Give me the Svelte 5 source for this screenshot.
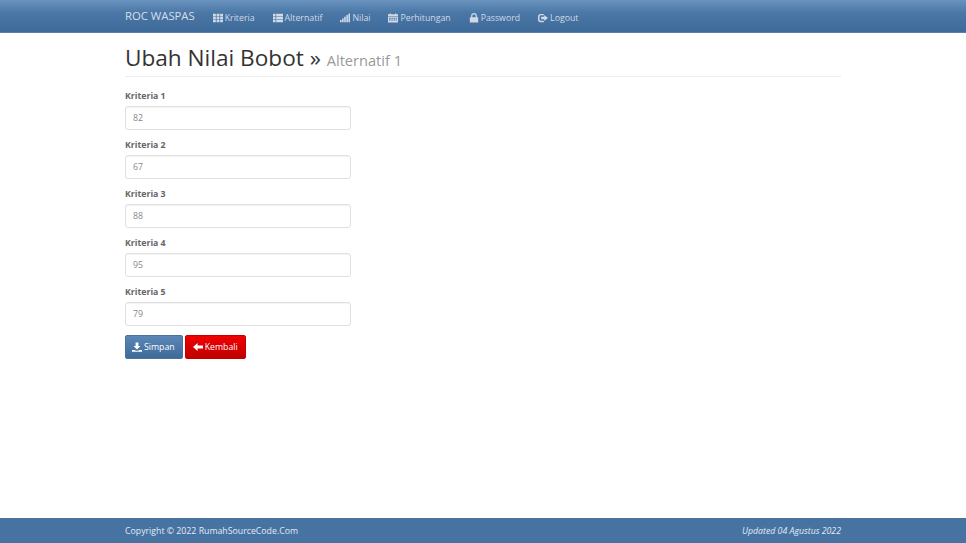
<script>
	const menu = [
		{ label: 'Kriteria', icon: 'th' },
		{ label: 'Alternatif', icon: 'list' },
		{ label: 'Nilai', icon: 'signal' },
		{ label: 'Perhitungan', icon: 'calendar' },
		{ label: 'Password', icon: 'lock' },
		{ label: 'Logout', icon: 'logout' }
	];

	const fields = [
		{ name: 'Kriteria 1', value: '82' },
		{ name: 'Kriteria 2', value: '67' },
		{ name: 'Kriteria 3', value: '88' },
		{ name: 'Kriteria 4', value: '95' },
		{ name: 'Kriteria 5', value: '79' }
	];
</script>

{#snippet icon(name)}
	<svg class="icon" viewBox="0 0 12 12" aria-hidden="true">
		{#if name === 'th'}
			<path d="M0 1h3.400v2.900H0zM4.300 1h3.400v2.900H4.300zM8.600 1H12v2.900H8.600zM0 4.600h3.400v2.900H0zM4.300 4.600h3.400v2.900H4.300zM8.600 4.600H12v2.900H8.600zM0 8.200h3.400v2.900H0zM4.300 8.200h3.400v2.900H4.300zM8.600 8.200H12v2.900H8.600z" />
		{:else if name === 'list'}
			<path d="M0 1h3v2.900H0zM3.800 1H12v2.900H3.800zM0 4.600h3v2.900H0zM3.800 4.600H12v2.900H3.800zM0 8.200h3v2.900H0zM3.800 8.200H12v2.900H3.800z" />
		{:else if name === 'signal'}
			<path d="M0 8.500h1.900V11H0zM2.500 6.500h1.900V11H2.500zM5 4.500h1.900V11H5zM7.600 2.500h1.900V11H7.600zM10.100 .5H12V11h-1.900z" />
		{:else if name === 'calendar'}
			<path d="M0 1.500h2V.500h1.500v1h5v-1H10v1h2v2.600H0zM0 4.800h12V11.500H0zM1.200 5.800V7h2V5.800zM4 5.800V7h1.800V5.800zM6.600 5.800V7h1.800V5.800zM9.200 5.800V7h1.600V5.800zM1.200 7.800V9h2V7.800zM4 7.800V9h1.800V7.800zM6.600 7.800V9h1.800V7.800zM9.200 7.800V9h1.600V7.800z" fill-rule="evenodd" />
		{:else if name === 'lock'}
			<path d="M1 5.200h1.500V3.500a3.500 3.500 0 0 1 7 0v1.700H11v6.300H1zM4 5.200h4V3.500a2 2 0 0 0-4 0z" fill-rule="evenodd" />
		{:else if name === 'logout'}
			<path d="M7 1.200v1.600H3.500A1.700 1.700 0 0 0 1.800 4.500v3.200a1.700 1.700 0 0 0 1.700 1.700H7V11H3.200A3.200 3.200 0 0 1 0 7.800V4.400A3.200 3.200 0 0 1 3.200 1.200zM7.500 2.500 12 6 7.500 9.500v-2H3.800v-3h3.700z" />
		{:else if name === 'save'}
			<path d="M4.300 .5h3.400v4.300h2.500L6 9 1.800 4.800h2.500zM0 9.500h3.200l1.300 1h3l1.300-1H12v2.300H0z" />
		{:else if name === 'back'}
			<path d="M5.500 1.300v3H12v3.400H5.500v3L0 6z" />
		{/if}
	</svg>
{/snippet}

<div class="page">
	<nav class="navbar">
		<div class="container nav-row">
			<span class="brand">ROC WASPAS</span>
			<ul>
				{#each menu as item}
					<li>{@render icon(item.icon)} {item.label}</li>
				{/each}
			</ul>
		</div>
	</nav>

	<main class="container content">
		<h1>Ubah Nilai Bobot &raquo; <small>Alternatif 1</small></h1>

		<form>
			{#each fields as field}
				<div class="form-group">
					<label for={field.name}>{field.name}</label>
					<input id={field.name} type="text" value={field.value} />
				</div>
			{/each}
			<div class="actions">
				<button type="button" class="btn btn-primary">{@render icon('save')} Simpan</button>
				<button type="button" class="btn btn-danger">{@render icon('back')} Kembali</button>
			</div>
		</form>
	</main>

	<footer>
		<div class="container footer-row">
			<span>Copyright &copy; 2022 RumahSourceCode.Com</span>
			<em>Updated 04 Agustus 2022</em>
		</div>
	</footer>
</div>

<style>
	:global(body) {
		margin: 0;
		background: #fff;
		font-family: 'Open Sans', 'Noto Sans', sans-serif;
		font-size: 10px;
		color: #555;
	}
	.page {
		display: flex;
		flex-direction: column;
		min-height: 543px;
	}
	.container {
		width: 716px;
		margin: 0 auto;
	}
	.navbar {
		height: 33px;
		box-sizing: border-box;
		background: linear-gradient(to bottom, #6a93be 0%, #4a77a6 40%, #3e6a99 100%);
		border-bottom: 1px solid #5a7ea6;
	}
	.nav-row {
		display: flex;
		align-items: center;
		height: 32px;
	}
	.brand {
		margin: 0 18px 2px 0;
		font-size: 11.300px;
		color: #d6dfe9;
	}
	ul {
		display: flex;
		gap: 18px;
		margin: 0;
		padding: 3px 0 0;
		list-style: none;
	}
	li {
		display: flex;
		align-items: center;
		gap: 2px;
		font-size: 8.750px;
		color: #cfdae6;
	}
	.icon {
		width: 10px;
		height: 10px;
		fill: currentColor;
		flex: none;
	}
	.content {
		flex: 1;
	}
	h1 {
		margin: 10px 0 12px;
		padding-bottom: 4px;
		border-bottom: 1px solid #eee;
		font-size: 22.600px;
		font-weight: 400;
		line-height: 29px;
		color: #333;
	}
	h1 small {
		font-size: 14.600px;
		line-height: 1;
		color: #999;
	}
	.form-group {
		margin-bottom: 8px;
	}
	label {
		display: block;
		margin-bottom: 3px;
		font-size: 8.750px;
		font-weight: 700;
		line-height: 14px;
		color: #666;
	}
	input {
		display: block;
		width: 226px;
		height: 24px;
		box-sizing: border-box;
		padding: 0 7px;
		border: 1px solid #e0e0e0;
		border-radius: 3px;
		box-shadow: inset 0 1px 1px rgba(0, 0, 0, 0.05);
		font: inherit;
		font-size: 8.750px;
		color: #888;
		background: #fff;
	}
	.actions {
		display: flex;
		gap: 2px;
		margin-top: 9px;
	}
	.btn {
		display: flex;
		align-items: center;
		gap: 2px;
		height: 24px;
		padding: 0 7px;
		border-radius: 2px;
		font: inherit;
		font-size: 8.750px;
		color: #fff;
	}
	.btn-primary {
		padding-left: 6px;
		background: linear-gradient(to bottom, #5a87b5, #3e6a99);
		border: 1px solid #4a729c;
	}
	.btn-danger {
		background: linear-gradient(to bottom, #f00000, #c00000);
		border: 1px solid #c40000;
	}
	footer {
		height: 25px;
		background: #4673a2;
		color: #e4ebf2;
	}
	.footer-row {
		display: flex;
		align-items: center;
		justify-content: space-between;
		height: 25px;
		font-size: 8.750px;
	}
</style>
